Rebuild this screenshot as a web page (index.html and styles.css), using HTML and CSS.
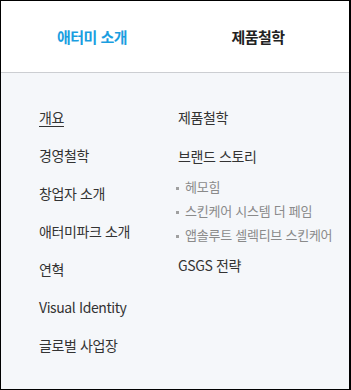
FILE: index.html
```html
<!DOCTYPE html>
<html lang="ko">
<head>
    <meta charset="UTF-8">
    <meta name="viewport" content="width=device-width, initial-scale=1.0">
    <title>애터미 소개</title>
    <link rel="stylesheet" href="styles.css">
</head>
<body>
    <div class="frame">
        <div class="tabs">
            <a class="tab active" href="#">애터미 소개</a>
            <a class="tab" href="#">제품철학</a>
        </div>
        <div class="menu">
            <ul class="col">
                <li><a class="current" href="#">개요</a></li>
                <li><a href="#">경영철학</a></li>
                <li><a href="#">창업자 소개</a></li>
                <li><a href="#">애터미파크 소개</a></li>
                <li><a href="#">연혁</a></li>
                <li><a href="#">Visual Identity</a></li>
                <li><a href="#">글로벌 사업장</a></li>
            </ul>
            <ul class="col col-right">
                <li><a href="#">제품철학</a></li>
                <li>
                    <a href="#">브랜드 스토리</a>
                    <ul class="sub">
                        <li><a href="#">헤모힘</a></li>
                        <li><a href="#">스킨케어 시스템 더 페임</a></li>
                        <li><a href="#">앱솔루트 셀렉티브 스킨케어</a></li>
                    </ul>
                </li>
                <li><a href="#">GSGS 전략</a></li>
            </ul>
        </div>
    </div>
</body>
</html>
```

FILE: styles.css
```css
body {
    margin: 0;
    font-family: "Noto Sans CJK KR", "Noto Sans", sans-serif;
    color: #333;
}

a {
    color: inherit;
    text-decoration: none;
}

ul {
    list-style: none;
    margin: 0;
    padding: 0;
}

.frame {
    width: 351px;
    height: 390px;
    box-sizing: border-box;
    border: 1px solid #000;
    border-right-width: 2px;
    background: #f5f7fa;
    display: flex;
    flex-direction: column;
}

.tabs {
    display: flex;
    height: 71px;
    padding: 0 8px;
    background: #fff;
    border-bottom: 1px solid #ccced2;
}

.tab {
    flex: 1;
    display: flex;
    align-items: center;
    justify-content: center;
    font-size: 15px;
    font-weight: bold;
    color: #222;
    letter-spacing: -0.5px;
}

.tab.active {
    color: #1a9ee0;
}

.menu {
    display: flex;
    padding: 34px 0 0 38px;
}

.col {
    width: 140px;
}

.col > li {
    font-size: 14px;
    line-height: 20px;
    margin-bottom: 18px;
    letter-spacing: -0.4px;
}

.col-right {
    margin-left: -1px;
}

.col-right > li {
    margin-bottom: 19px;
}

.current {
    text-decoration: underline;
    text-underline-offset: 3px;
}

.sub {
    margin-top: 11px;
    margin-left: -2px;
    margin-bottom: -8px;
}

.sub li {
    position: relative;
    padding-left: 9px;
    font-size: 13px;
    line-height: 19px;
    margin-bottom: 5px;
    color: #8a8a8a;
    letter-spacing: -0.25px;
    white-space: nowrap;
}

.sub li::before {
    content: "";
    position: absolute;
    left: 0;
    top: 10px;
    width: 3px;
    height: 3px;
    background: #a0a0a0;
}
```
